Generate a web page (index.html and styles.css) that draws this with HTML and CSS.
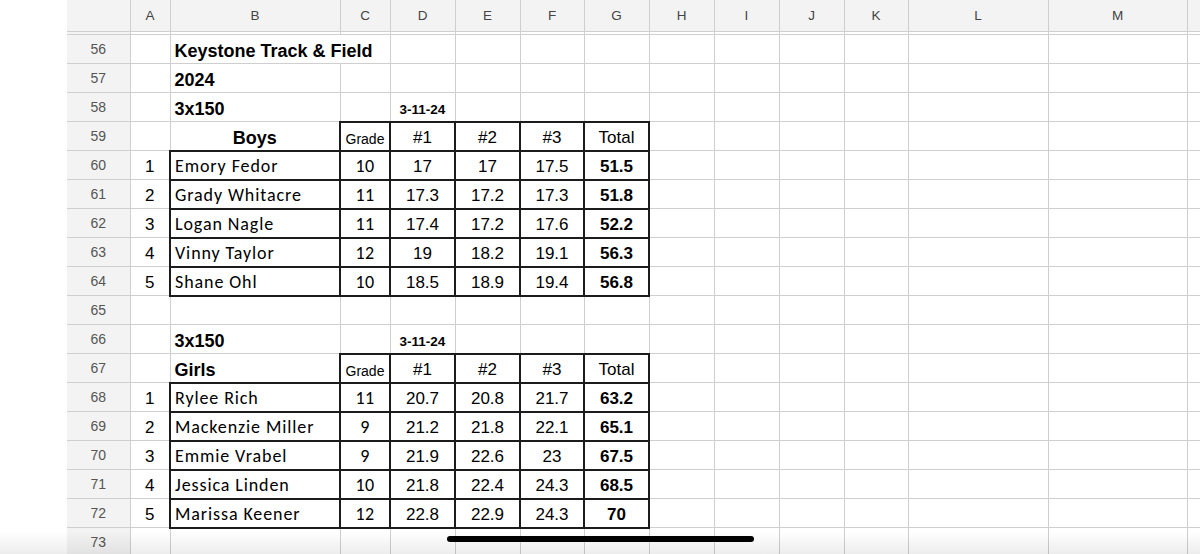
FILE: index.html
```html
<!DOCTYPE html>
<html>
<head>
<meta charset="utf-8">
<title>Keystone Track &amp; Field</title>
<link rel="stylesheet" href="styles.css">
</head>
<body>
<div class="sheet">
<table class="grid">
<colgroup>
<col class="c-rh"><col class="c-a"><col class="c-b"><col class="c-c"><col class="c-d"><col class="c-e"><col class="c-f"><col class="c-g"><col class="c-h"><col class="c-i"><col class="c-j"><col class="c-k"><col class="c-l"><col class="c-m"><col class="c-n">
</colgroup>
<thead>
<tr class="colhdr"><th class="corner"></th><th>A</th><th>B</th><th>C</th><th>D</th><th>E</th><th>F</th><th>G</th><th>H</th><th>I</th><th>J</th><th>K</th><th>L</th><th>M</th><th></th></tr>
<tr class="freeze"><td class="rh"></td><td></td><td></td><td></td><td></td><td></td><td></td><td></td><td></td><td></td><td></td><td></td><td></td><td></td><td></td></tr>
</thead>
<tbody>
<tr><th class="rh">56</th><td></td><td class="head spill">Keystone Track &amp; Field</td><td class="spilled"></td><td></td><td></td><td></td><td></td><td></td><td></td><td></td><td></td><td></td><td></td><td></td></tr>
<tr><th class="rh">57</th><td></td><td class="head">2024</td><td></td><td></td><td></td><td></td><td></td><td></td><td></td><td></td><td></td><td></td><td></td><td></td></tr>
<tr><th class="rh">58</th><td></td><td class="head">3x150</td><td></td><td class="date">3-11-24</td><td></td><td></td><td></td><td></td><td></td><td></td><td></td><td></td><td></td><td></td></tr>
<tr><th class="rh">59</th><td></td><td class="head center">Boys</td><td class="box grade-h">Grade</td><td class="box num hdr">#1</td><td class="box num hdr">#2</td><td class="box num hdr">#3</td><td class="box num hdr">Total</td><td></td><td></td><td></td><td></td><td></td><td></td><td></td></tr>
<tr><th class="rh">60</th><td class="rank">1</td><td class="box name">Emory Fedor</td><td class="box grade">10</td><td class="box num">17</td><td class="box num">17</td><td class="box num">17.5</td><td class="box total">51.5</td><td></td><td></td><td></td><td></td><td></td><td></td><td></td></tr>
<tr><th class="rh">61</th><td class="rank">2</td><td class="box name">Grady Whitacre</td><td class="box grade">11</td><td class="box num">17.3</td><td class="box num">17.2</td><td class="box num">17.3</td><td class="box total">51.8</td><td></td><td></td><td></td><td></td><td></td><td></td><td></td></tr>
<tr><th class="rh">62</th><td class="rank">3</td><td class="box name">Logan Nagle</td><td class="box grade">11</td><td class="box num">17.4</td><td class="box num">17.2</td><td class="box num">17.6</td><td class="box total">52.2</td><td></td><td></td><td></td><td></td><td></td><td></td><td></td></tr>
<tr><th class="rh">63</th><td class="rank">4</td><td class="box name">Vinny Taylor</td><td class="box grade">12</td><td class="box num">19</td><td class="box num">18.2</td><td class="box num">19.1</td><td class="box total">56.3</td><td></td><td></td><td></td><td></td><td></td><td></td><td></td></tr>
<tr><th class="rh">64</th><td class="rank">5</td><td class="box name">Shane Ohl</td><td class="box grade">10</td><td class="box num">18.5</td><td class="box num">18.9</td><td class="box num">19.4</td><td class="box total">56.8</td><td></td><td></td><td></td><td></td><td></td><td></td><td></td></tr>
<tr><th class="rh">65</th><td></td><td></td><td></td><td></td><td></td><td></td><td></td><td></td><td></td><td></td><td></td><td></td><td></td><td></td></tr>
<tr><th class="rh">66</th><td></td><td class="head">3x150</td><td></td><td class="date">3-11-24</td><td></td><td></td><td></td><td></td><td></td><td></td><td></td><td></td><td></td><td></td></tr>
<tr><th class="rh">67</th><td></td><td class="head">Girls</td><td class="box grade-h">Grade</td><td class="box num hdr">#1</td><td class="box num hdr">#2</td><td class="box num hdr">#3</td><td class="box num hdr">Total</td><td></td><td></td><td></td><td></td><td></td><td></td><td></td></tr>
<tr><th class="rh">68</th><td class="rank">1</td><td class="box name">Rylee Rich</td><td class="box grade">11</td><td class="box num">20.7</td><td class="box num">20.8</td><td class="box num">21.7</td><td class="box total">63.2</td><td></td><td></td><td></td><td></td><td></td><td></td><td></td></tr>
<tr><th class="rh">69</th><td class="rank">2</td><td class="box name">Mackenzie Miller</td><td class="box grade">9</td><td class="box num">21.2</td><td class="box num">21.8</td><td class="box num">22.1</td><td class="box total">65.1</td><td></td><td></td><td></td><td></td><td></td><td></td><td></td></tr>
<tr><th class="rh">70</th><td class="rank">3</td><td class="box name">Emmie Vrabel</td><td class="box grade">9</td><td class="box num">21.9</td><td class="box num">22.6</td><td class="box num">23</td><td class="box total">67.5</td><td></td><td></td><td></td><td></td><td></td><td></td><td></td></tr>
<tr><th class="rh">71</th><td class="rank">4</td><td class="box name">Jessica Linden</td><td class="box grade">10</td><td class="box num">21.8</td><td class="box num">22.4</td><td class="box num">24.3</td><td class="box total">68.5</td><td></td><td></td><td></td><td></td><td></td><td></td><td></td></tr>
<tr><th class="rh">72</th><td class="rank">5</td><td class="box name">Marissa Keener</td><td class="box grade">12</td><td class="box num">22.8</td><td class="box num">22.9</td><td class="box num">24.3</td><td class="box total">70</td><td></td><td></td><td></td><td></td><td></td><td></td><td></td></tr>
<tr><th class="rh">73</th><td></td><td></td><td></td><td></td><td></td><td></td><td></td><td></td><td></td><td></td><td></td><td></td><td></td><td></td></tr>
</tbody>
</table>
</div>
<div class="bottom-fade"></div>
<div class="home-bar"></div>
</body>
</html>
```

FILE: styles.css
```css
html, body {
  margin: 0;
  padding: 0;
  background: #ffffff;
}
body {
  width: 1200px;
  height: 554px;
  overflow: hidden;
  position: relative;
  font-family: "Liberation Sans", Arial, sans-serif;
  color: #000;
}
.sheet {
  padding-left: 67px;
}
.grid {
  border-collapse: collapse;
  table-layout: fixed;
  width: 1180px;
}
.c-rh { width: 63px; }
.c-a { width: 40px; }
.c-b { width: 170px; }
.c-c { width: 50px; }
.c-d { width: 65px; }
.c-e { width: 65px; }
.c-f { width: 64px; }
.c-g { width: 65px; }
.c-h { width: 65px; }
.c-i { width: 65px; }
.c-j { width: 65px; }
.c-k { width: 64px; }
.c-l { width: 140px; }
.c-m { width: 139px; }
.c-n { width: 60px; }

.grid td, .grid th {
  padding: 0 4px;
  border: 1px solid #cfcfcf;
  font-weight: normal;
  white-space: nowrap;
  overflow: hidden;
  vertical-align: middle;
  font-size: 17px;
  line-height: 18px;
  text-align: left;
}
.grid .colhdr th {
  height: 31px;
  background: #f3f3f3;
  color: #444;
  font-size: 13.5px;
  text-align: center;
  border-top: none;
}
.grid .colhdr th.corner,
.grid .freeze td.rh,
.grid th.rh {
  border-left: none;
}
.grid .freeze td {
  height: 2px;
  padding: 0;
  line-height: 0;
  font-size: 0;
  background: #fff;
}
.grid .freeze td.rh {
  background: #f3f3f3;
}
tbody tr {
  height: 29px;
}
.grid th.rh {
  background: #f3f3f3;
  color: #555;
  font-size: 14px;
  text-align: center;
}
.grid td.head {
  font-weight: bold;
  font-size: 18px;
  padding-top: 4px;
}
.grid td.spill {
  overflow: visible;
  border-right: none;
}
.grid td.spilled {
  border-left: none;
}
.grid td.center {
  text-align: center;
}
.grid td.date {
  font-weight: bold;
  font-size: 13.5px;
  text-align: center;
  padding-top: 6px;
}
.grid td.box {
  border: 2px solid #1c1c1c;
}
.grid td.grade-h {
  font-size: 14px;
  text-align: center;
  padding: 5px 0 0;
}
.grid td.num {
  text-align: center;
  padding-top: 3px;
}
.grid td.hdr {
  padding-top: 4px;
}
.grid td.total {
  text-align: center;
  font-weight: bold;
  padding-top: 3px;
}
.grid td.rank {
  text-align: center;
  padding-top: 3px;
}
.grid td.name {
  font-family: Carlito, Lato, "Open Sans", sans-serif;
  font-size: 18px;
  letter-spacing: 0.9px;
  padding-top: 1px;
}
.grid td.grade {
  font-family: Carlito, Lato, "Open Sans", sans-serif;
  font-size: 18px;
  letter-spacing: 0.5px;
  text-align: center;
  padding: 1px 0 0;
}
.bottom-fade {
  position: absolute;
  left: 0;
  right: 0;
  bottom: 0;
  height: 23px;
  background: linear-gradient(to bottom, rgba(0,0,0,0), rgba(0,0,0,0.07));
  pointer-events: none;
}
.home-bar {
  position: absolute;
  left: 447px;
  top: 536px;
  width: 307px;
  height: 6px;
  border-radius: 3px;
  background: #000;
}
```
